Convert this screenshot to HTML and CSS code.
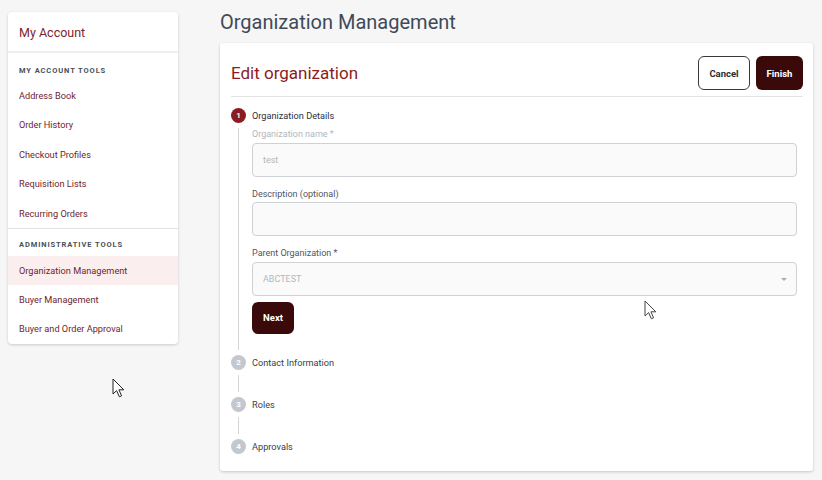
FILE: index.html
```html
<!DOCTYPE html>
<html>
<head>
<meta charset="utf-8">
<link rel="stylesheet" href="styles.css">
</head>
<body>
<div class="page">
  <aside class="sidebar">
    <div class="side-head">My Account</div>
    <div class="side-section">
      <div class="side-title">MY ACCOUNT TOOLS</div>
      <a class="side-item">Address Book</a>
      <a class="side-item">Order History</a>
      <a class="side-item">Checkout Profiles</a>
      <a class="side-item">Requisition Lists</a>
      <a class="side-item">Recurring Orders</a>
    </div>
    <div class="side-section second">
      <div class="side-title">ADMINISTRATIVE TOOLS</div>
      <a class="side-item row29 active">Organization Management</a>
      <a class="side-item row29">Buyer Management</a>
      <a class="side-item row29">Buyer and Order Approval</a>
    </div>
  </aside>

  <main class="main">
    <h1 class="page-title">Organization Management</h1>
    <section class="card">
      <div class="card-head">
        <h2 class="card-title">Edit organization</h2>
        <div class="actions">
          <button class="btn btn-outline">Cancel</button>
          <button class="btn btn-dark">Finish</button>
        </div>
      </div>

      <div class="steps">
        <div class="step-head"><span class="num active">1</span><span class="step-label">Organization Details</span></div>
        <div class="step-body">
          <label class="field-label muted">Organization name *</label>
          <div class="input"><span class="ph">test</span></div>
          <label class="field-label">Description (optional)</label>
          <div class="input"></div>
          <label class="field-label">Parent Organization *</label>
          <div class="input select"><span class="ph">ABCTEST</span><span class="caret"></span></div>
          <button class="btn btn-dark btn-next">Next</button>
        </div>

        <div class="step-head"><span class="num">2</span><span class="step-label">Contact Information</span></div>
        <div class="connector"></div>
        <div class="step-head"><span class="num">3</span><span class="step-label">Roles</span></div>
        <div class="connector"></div>
        <div class="step-head"><span class="num">4</span><span class="step-label">Approvals</span></div>
      </div>
    </section>
  </main>
</div>

<svg class="cursor cursor-a" width="14" height="21" viewBox="0 0 14 21"><path d="M1 1 L1 16 L4.6 12.6 L7.4 18.8 L9.6 17.8 L6.9 11.8 L11.8 11.8 Z" fill="#fff" stroke="#222" stroke-width="1"/></svg>
<svg class="cursor cursor-b" width="14" height="21" viewBox="0 0 14 21"><path d="M1 1 L1 16 L4.6 12.6 L7.4 18.8 L9.6 17.8 L6.9 11.8 L11.8 11.8 Z" fill="#fff" stroke="#444" stroke-width="1"/></svg>
</body>
</html>
```

FILE: styles.css
```css
* { box-sizing: border-box; }
html, body { margin: 0; padding: 0; }
body {
  background: #f6f6f6;
  font-family: Roboto, "Liberation Sans", Arial, sans-serif;
  width: 822px;
  height: 480px;
  overflow: hidden;
  position: relative;
}
.page {
  display: flex;
  align-items: flex-start;
  padding: 12px 9px 0 8px;
  gap: 42px;
}

/* Sidebar */
.sidebar {
  width: 170px;
  flex: none;
  background: #fff;
  border-radius: 4px;
  box-shadow: 0 1px 3px rgba(0,0,0,0.18);
  padding-bottom: 1px;
}
.side-head {
  height: 41px;
  line-height: 41px;
  padding-left: 11px;
  font-size: 12.5px;
  color: #7b1f2d;
  border-bottom: 2px solid #eeeeee;
}
.side-section { display: flex; flex-direction: column; }
.side-section.second { border-top: 1px solid #e2e2e2; }
.side-title {
  font-size: 7.5px;
  font-weight: 700;
  letter-spacing: 0.9px;
  color: #4a4f57;
  line-height: 10px;
  padding: 12.5px 11px 5.5px;
}
.side-section.second .side-title { padding: 11.5px 11px 5.5px; }
.side-item {
  display: block;
  height: 29.4px;
  line-height: 29.4px;
  padding-left: 11px;
  font-size: 9.2px;
  color: #6d2630;
}
.side-item.row29 { height: 29px; line-height: 29px; }
.side-item.active { background: #fbeeee; }

/* Main */
.main { flex: 1; min-width: 0; }
.page-title {
  margin: -2px 0 9px;
  font-size: 20px;
  line-height: 24px;
  font-weight: 400;
  color: #3f4a59;
}
.card {
  background: #fff;
  border-radius: 3px;
  box-shadow: 0 1px 3px rgba(0,0,0,0.2);
  padding: 13px 10px 17px 11px;
  height: 428px;
}
.card-head {
  display: flex;
  align-items: center;
  justify-content: space-between;
  padding-bottom: 6px;
  border-bottom: 1px solid #e3e3e3;
}
.card-title {
  margin: 0;
  font-size: 17px;
  font-weight: 400;
  color: #8a1c22;
}
.actions { display: flex; gap: 6px; }
.btn {
  font-family: Roboto, "Liberation Sans", Arial, sans-serif;
  font-size: 9.5px;
  font-weight: 700;
  height: 34px;
  border-radius: 6px;
  padding: 0;
  cursor: pointer;
}
.btn-outline {
  width: 52px;
  background: #fff;
  border: 1px solid #3a3a3a;
  color: #2b2b33;
}
.btn-dark {
  width: 47px;
  background: #3a0909;
  border: none;
  color: #fff;
}

/* Steps */
.steps { padding-top: 11px; }
.step-head {
  display: flex;
  align-items: center;
  gap: 6px;
  height: 15px;
}
.num {
  width: 15px;
  height: 15px;
  border-radius: 50%;
  background: #c3c7ce;
  color: #fff;
  font-size: 8px;
  font-weight: 700;
  display: flex;
  align-items: center;
  justify-content: center;
  flex: none;
}
.num.active { background: #8a1c22; }
.step-label {
  font-size: 9.2px;
  color: #3a3f47;
}
.step-head .num.active + .step-label { color: #2e3138; }
.step-body {
  margin: 5px 0 5px 7px;
  border-left: 1px solid #d4d4d4;
  padding: 0 6px 16px 13px;
  display: flex;
  flex-direction: column;
  align-items: flex-start;
}
.connector {
  margin: 5px 0 5px 7px;
  height: 17px;
  border-left: 1px solid #d4d4d4;
}
.field-label {
  font-size: 9px;
  line-height: 12px;
  color: #4f5560;
  margin-bottom: 2.5px;
}
.field-label.muted { color: #b3b6bb; }
.input {
  width: 100%;
  height: 34px;
  background: #fafafa;
  border: 1px solid #cfd1d4;
  border-radius: 4px;
  display: flex;
  align-items: center;
  padding-left: 10px;
  margin-bottom: 11px;
  position: relative;
}
.input.select { margin-bottom: 6px; }
.ph { font-size: 9px; color: #b4b7bc; }
.caret {
  position: absolute;
  right: 9px;
  top: 15px;
  width: 0;
  height: 0;
  border-left: 3px solid transparent;
  border-right: 3px solid transparent;
  border-top: 3px solid #a8abb0;
}
.btn-next { width: 42px; height: 32px; }

/* cursors from screenshot */
.cursor { position: absolute; }
.cursor-a { left: 112px; top: 378px; }
.cursor-b { left: 644px; top: 300px; }
```
